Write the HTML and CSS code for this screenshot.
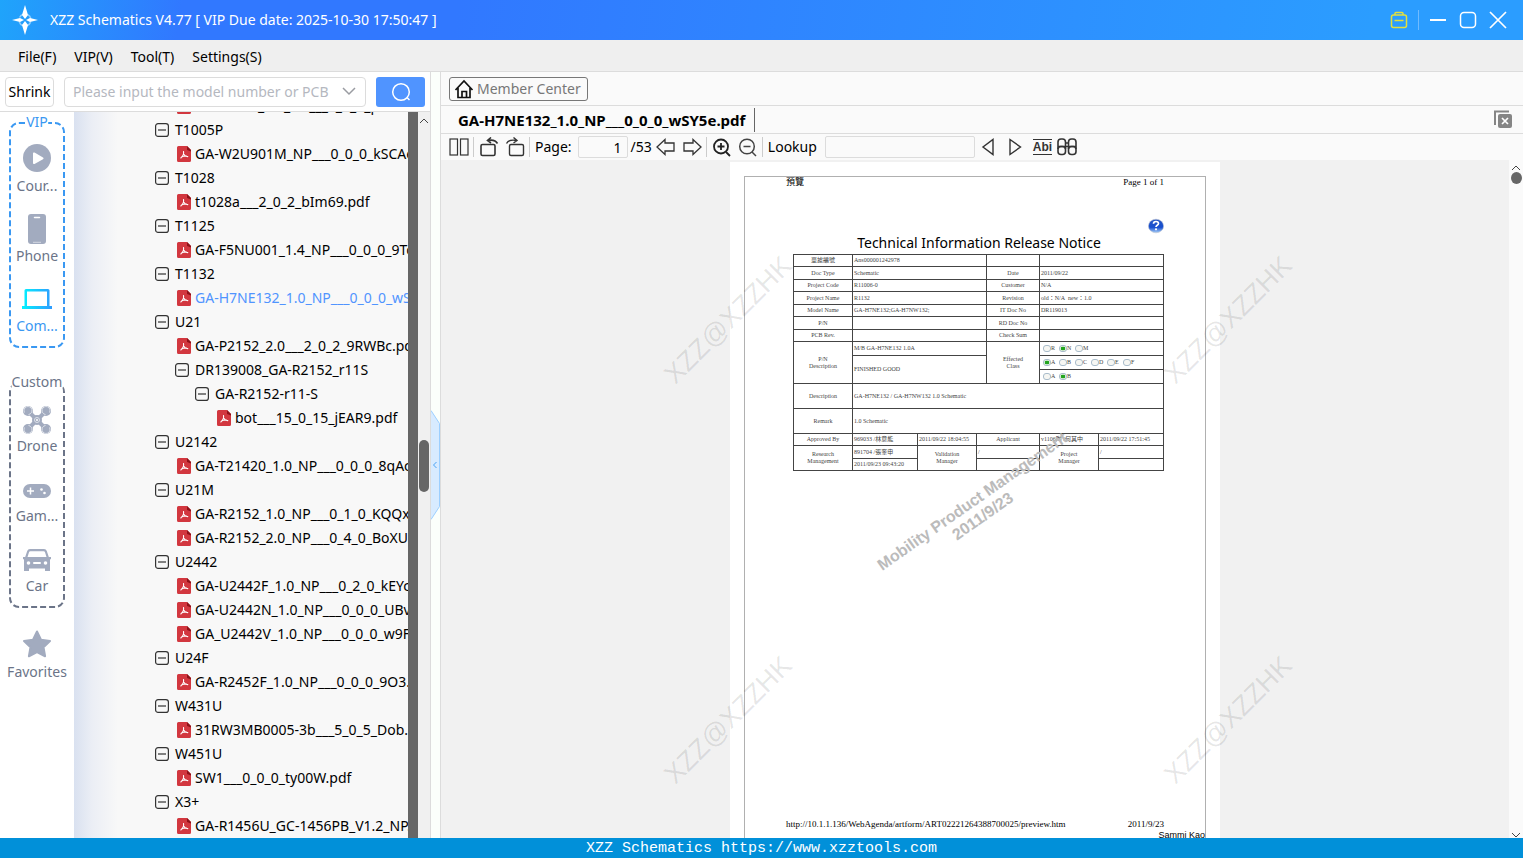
FILE: index.html
```html
<!DOCTYPE html>
<html lang="en">
<head>
    <meta charset="utf-8">
    <title>XZZ Schematics</title>
    <meta name="viewport" content="width=device-width, initial-scale=1">
    <link rel="stylesheet" href="styles.css">
</head>
<body>
    <!-- Shared icons -->
    <svg class="sprite" aria-hidden="true">
        <symbol id="minus" viewBox="0 0 14 14">
            <rect x="0.6" y="0.6" width="12.8" height="12.8" rx="2.5" fill="none" stroke="#333" stroke-width="1.2"/>
            <path d="M3 7h8" stroke="#333" stroke-width="1.2"/>
        </symbol>
        <symbol id="pdf" viewBox="0 0 14 16">
            <path d="M1.5 0H10l4 4v10.500a1.500 1.500 0 0 1-1.500 1.500h-11A1.500 1.500 0 0 1 0 14.500v-13A1.500 1.500 0 0 1 1.500 0z" fill="#d2373f"/>
            <path d="M10 0l4 4v1.500l-4-1.500z" fill="#8e1219"/>
            <path d="M6.500 5.500c.6 2.500.3 3.800-2.700 6.500M6.800 8.300c.8 1.500 2 2.300 4 2.300M4.500 11c1.500-.8 3.500-1.200 5-.9" fill="none" stroke="#fff" stroke-width="1.100" stroke-linecap="round"/>
        </symbol>
    </svg>

    <header class="titlebar">
        <svg class="logo" width="26" height="30" viewBox="0 0 26 30">
            <circle cx="13" cy="15" r="6" fill="none" stroke="#8ccdff" stroke-width="1.500" stroke-dasharray="5 4.400" stroke-dashoffset="-2.200"/>
            <path d="M13 0l3 10-3 4-3-4zM13 30l3-10-3-4-3 4zM0 15l8-2 4 2-4 2zM26 15l-8-2-4 2 4 2z" fill="#fff"/>
        </svg>
        <h1>XZZ Schematics V4.77 [ VIP Due date: 2025-10-30 17:50:47 ]</h1>
        <div class="window-buttons">
            <button type="button" aria-label="Toolbox">
                <svg width="18" height="18" viewBox="0 0 18 18" fill="none" stroke="#e3e03c" stroke-width="1.500">
                    <rect x="1.500" y="4" width="15" height="12.500" rx="2"/>
                    <path d="M5 4V2.500A1 1 0 0 1 6 1.500h6a1 1 0 0 1 1 1V4M4.500 9.500h9"/>
                </svg>
            </button>
            <span class="divider"></span>
            <button type="button" aria-label="Minimize">
                <svg width="18" height="18" viewBox="0 0 18 18" stroke="#fff" stroke-width="2"><path d="M1 9h16"/></svg>
            </button>
            <button type="button" aria-label="Maximize">
                <svg width="18" height="18" viewBox="0 0 18 18"><rect x="1.500" y="1.500" width="15" height="15" rx="3.500" fill="none" stroke="#fff" stroke-width="1.500"/></svg>
            </button>
            <button type="button" aria-label="Close">
                <svg width="18" height="18" viewBox="0 0 18 18" stroke="#fff" stroke-width="1.700"><path d="M1 1l16 16M17 1L1 17"/></svg>
            </button>
        </div>
    </header>

    <nav class="menu">
        <button type="button">File(F)</button>
        <button type="button">VIP(V)</button>
        <button type="button">Tool(T)</button>
        <button type="button">Settings(S)</button>
    </nav>

    <main class="workspace">
        <section class="left-panel">
            <form class="search">
                <button type="button" class="shrink">Shrink</button>
                <div class="combo">
                    <input type="text" aria-label="Search" placeholder="Please input the model number or PCB">
                    <svg width="14" height="9" viewBox="0 0 14 9" fill="none" stroke="#9a9ca2" stroke-width="1.500"><path d="M1 1l6 6 6-6"/></svg>
                </div>
                <button type="submit" class="go" aria-label="Search">
                    <svg width="20" height="20" viewBox="0 0 20 20" fill="none" stroke="#fff" stroke-width="1.500"><circle cx="10" cy="10" r="8.300"/><path d="M16 15.500l2.500 2.500"/></svg>
                </button>
            </form>

            <div class="browser">
                <aside class="sidebar">
                    <div class="group vip">
                        <svg class="outline"><rect x="1" y="1" rx="9"/></svg>
                        <span class="legend">VIP</span>
                        <a href="#courses">
                            <svg width="32" height="32" viewBox="0 0 32 32"><circle cx="16" cy="16" r="14" fill="#a2abbf"/><path d="M12 11.500v9.500a1 1 0 0 0 1.500.9l8.500-4.700a1 1 0 0 0 0-1.700l-8.500-4.900a1 1 0 0 0-1.500.9z" fill="#fff"/></svg>
                            <span>Cour...</span>
                        </a>
                        <a href="#phone">
                            <svg width="32" height="32" viewBox="0 0 32 32"><rect x="7" y="2" width="18" height="30" rx="3" fill="#a2abbf"/><path d="M13.500 5.500h5" stroke="#fff" stroke-width="1.500" stroke-linecap="round"/><path d="M12 30.300h8" stroke="#d5d9e3"/></svg>
                            <span>Phone</span>
                        </a>
                        <a href="#computer" class="active">
                            <svg width="32" height="32" viewBox="0 0 32 32">
                                <defs><linearGradient id="cyan"><stop offset="0" stop-color="#02f3fe"/><stop offset="1" stop-color="#2f9bff"/></linearGradient></defs>
                                <path fill="url(#cyan)" fill-rule="evenodd" d="M5 7h22a1.500 1.500 0 0 1 1.500 1.500V24H31v3H1v-3h2.500V8.500A1.500 1.500 0 0 1 5 7zm1 2.500V24h20V9.500z"/>
                            </svg>
                            <span>Com...</span>
                        </a>
                    </div>

                    <div class="group custom">
                        <svg class="outline"><rect x="1" y="1" rx="9"/></svg>
                        <span class="legend">Custom</span>
                        <a href="#drone">
                            <svg width="32" height="32" viewBox="0 0 32 32">
                                <path d="M7 7l18 18M25 7L7 25" stroke="#a2abbf" stroke-width="4"/>
                                <g fill="#a2abbf"><circle cx="7" cy="7" r="5"/><circle cx="25" cy="7" r="5"/><circle cx="7" cy="25" r="5"/><circle cx="25" cy="25" r="5"/><circle cx="16" cy="16" r="5"/></g>
                                <g fill="none" stroke="#dde1e9" stroke-width="1"><path d="M3.500 8.500a4 4 0 1 1 4 2M28.500 8.500a4 4 0 1 0-4 2M3.500 23.500a4 4 0 1 0 4-2M28.500 23.500a4 4 0 1 1-4-2"/><circle cx="16" cy="16" r="2.500"/></g>
                                <circle cx="16" cy="16" r="1" fill="#fff"/>
                            </svg>
                            <span>Drone</span>
                        </a>
                        <a href="#game">
                            <svg width="32" height="32" viewBox="0 0 32 32"><rect x="2" y="10" width="28" height="14" rx="7" fill="#a2abbf"/><path d="M9.500 13.500v7M6 17h7" stroke="#fff" stroke-width="1.500"/><circle cx="20.500" cy="15.500" r="1.300" fill="#fff"/><circle cx="23.500" cy="19" r="1.300" fill="#fff"/></svg>
                            <span>Gam...</span>
                        </a>
                        <a href="#car">
                            <svg width="32" height="32" viewBox="0 0 32 32">
                                <path fill="#a2abbf" fill-rule="evenodd" d="M9 5h14a3 3 0 0 1 2.800 2l2 6H30v2l-1 .5V27h-5v-2.500H8V27H3V15.500L2 15v-2h2.200l2-6A3 3 0 0 1 9 5zm.3 2.200a1.500 1.500 0 0 0-1.300 1L6.500 13h19L24 8.200a1.500 1.500 0 0 0-1.300-1z"/>
                                <g fill="#fff"><circle cx="7.500" cy="19" r="1.800"/><circle cx="24.500" cy="19" r="1.800"/><rect x="12" y="18" width="8" height="2" rx="1"/></g>
                            </svg>
                            <span>Car</span>
                        </a>
                    </div>

                    <a href="#favorites" class="favorites">
                        <svg width="32" height="32" viewBox="0 0 32 32"><path d="M16 3.500l4 8.300 9 1.200-6.500 6.300 1.600 9L16 24l-8.100 4.300 1.600-9L3 13l9-1.200z" fill="#a2abbf" stroke="#a2abbf" stroke-width="2" stroke-linejoin="round"/></svg>
                        <span>Favorites</span>
                    </a>
                </aside>

                <ul class="tree">
                    <li class="file"><svg><use href="#pdf"/></svg>GA-T1005_1.0_NP___0_0_0_pB</li>
                    <li><svg><use href="#minus"/></svg>T1005P</li>
                    <li class="file"><svg><use href="#pdf"/></svg>GA-W2U901M_NP___0_0_0_kSCAe.pdf</li>
                    <li><svg><use href="#minus"/></svg>T1028</li>
                    <li class="file"><svg><use href="#pdf"/></svg>t1028a___2_0_2_bIm69.pdf</li>
                    <li><svg><use href="#minus"/></svg>T1125</li>
                    <li class="file"><svg><use href="#pdf"/></svg>GA-F5NU001_1.4_NP___0_0_0_9Tc.pdf</li>
                    <li><svg><use href="#minus"/></svg>T1132</li>
                    <li class="file selected"><svg><use href="#pdf"/></svg>GA-H7NE132_1.0_NP___0_0_0_wSY5e.pdf</li>
                    <li><svg><use href="#minus"/></svg>U21</li>
                    <li class="file"><svg><use href="#pdf"/></svg>GA-P2152_2.0___2_0_2_9RWBc.pdf</li>
                    <li class="level-2"><svg><use href="#minus"/></svg>DR139008_GA-R2152_r11S</li>
                    <li class="level-3"><svg><use href="#minus"/></svg>GA-R2152-r11-S</li>
                    <li class="file level-3"><svg><use href="#pdf"/></svg>bot___15_0_15_jEAR9.pdf</li>
                    <li><svg><use href="#minus"/></svg>U2142</li>
                    <li class="file"><svg><use href="#pdf"/></svg>GA-T21420_1.0_NP___0_0_0_8qAc.pdf</li>
                    <li><svg><use href="#minus"/></svg>U21M</li>
                    <li class="file"><svg><use href="#pdf"/></svg>GA-R2152_1.0_NP___0_1_0_KQQx.pdf</li>
                    <li class="file"><svg><use href="#pdf"/></svg>GA-R2152_2.0_NP___0_4_0_BoXU.pdf</li>
                    <li><svg><use href="#minus"/></svg>U2442</li>
                    <li class="file"><svg><use href="#pdf"/></svg>GA-U2442F_1.0_NP___0_2_0_kEYc.pdf</li>
                    <li class="file"><svg><use href="#pdf"/></svg>GA-U2442N_1.0_NP___0_0_0_UBv.pdf</li>
                    <li class="file"><svg><use href="#pdf"/></svg>GA_U2442V_1.0_NP___0_0_0_w9F.pdf</li>
                    <li><svg><use href="#minus"/></svg>U24F</li>
                    <li class="file"><svg><use href="#pdf"/></svg>GA-R2452F_1.0_NP___0_0_0_9O3.pdf</li>
                    <li><svg><use href="#minus"/></svg>W431U</li>
                    <li class="file"><svg><use href="#pdf"/></svg>31RW3MB0005-3b___5_0_5_Dob.pdf</li>
                    <li><svg><use href="#minus"/></svg>W451U</li>
                    <li class="file"><svg><use href="#pdf"/></svg>SW1___0_0_0_ty00W.pdf</li>
                    <li><svg><use href="#minus"/></svg>X3+</li>
                    <li class="file"><svg><use href="#pdf"/></svg>GA-R1456U_GC-1456PB_V1.2_NP.pdf</li>
                </ul>
                <div class="tree-edge"></div>
                <div class="tree-scroll">
                    <svg width="10" height="6" viewBox="0 0 10 6" fill="none" stroke="#444"><path d="M1 5l4-4 4 4"/></svg>
                    <div class="thumb"></div>
                </div>
            </div>
        </section>

        <div class="splitter">
            <button type="button" aria-label="Collapse panel">
                <svg width="9" height="110" viewBox="0 0 9 110"><path d="M0 .5l8.500 13v83L0 109.500" fill="#d8ebff" stroke="#9ccfff"/><path d="M5.500 52l-3 3 3 3" fill="none" stroke="#4aa3f5"/></svg>
            </button>
        </div>

        <section class="right-panel">
            <div class="member-bar">
                <button type="button" class="member">
                    <svg width="20" height="20" viewBox="0 0 20 20" fill="none" stroke="#111" stroke-width="1.700"><path d="M1.500 11L10 2l8.500 9M4 9v9.500h12V9M8 18.500V12.500h4.500v6"/></svg>
                    Member Center
                </button>
            </div>
            <div class="tabs">
                <a href="#document" class="tab">GA-H7NE132_1.0_NP___0_0_0_wSY5e.pdf</a>
                <button type="button" class="close-all" aria-label="Close all">
                    <svg width="20" height="20" viewBox="0 0 20 20"><path d="M2 15V1.500h14" fill="none" stroke="#858585" stroke-width="2"/><rect x="5" y="4" width="14" height="14" rx="2" fill="#858585"/><path d="M9 8l6 6M15 8l-6 6" stroke="#fff" stroke-width="1.700"/></svg>
                </button>
            </div>
            <div class="toolbar">
                <button type="button" aria-label="Two pages"><svg width="20" height="20" viewBox="0 0 20 20" fill="none" stroke="#333" stroke-width="1.200"><rect x="1" y="2" width="7.500" height="16"/><rect x="11.500" y="2" width="7.500" height="16"/></svg></button>
                <span class="line"></span>
                <button type="button" aria-label="Rotate left"><svg width="20" height="20" viewBox="0 0 20 20" fill="none" stroke="#333" stroke-width="1.600"><rect x="2" y="7.500" width="14" height="11" rx="1.500"/><path d="M18.500 6.500c-1.500-2.800-5-4-10-3M12 .5L8.500 3.500 12 6"/></svg></button>
                <button type="button" class="rotate-right" aria-label="Rotate right"><svg width="20" height="20" viewBox="0 0 20 20" fill="none" stroke="#333" stroke-width="1.400"><rect x="4.500" y="7.500" width="14" height="11" rx="1.500"/><path d="M1.500 6.500c1.500-2.800 5-4 10-3M8.500 .5l3.500 3L8.500 6"/></svg></button>
                <span class="line"></span>
                <label for="page">Page:</label>
                <input type="text" id="page" value="1">
                <span class="total">/53</span>
                <button type="button" aria-label="Previous page"><svg width="20" height="20" viewBox="0 0 20 20" fill="none" stroke="#333" stroke-width="1.300"><path d="M1 10l8-7.500V6h9v8H9v3.500z"/></svg></button>
                <button type="button" class="next" aria-label="Next page"><svg width="20" height="20" viewBox="0 0 20 20" fill="none" stroke="#333" stroke-width="1.300"><path d="M19 10l-8-7.500V6H2v8h9v3.500z"/></svg></button>
                <span class="line"></span>
                <button type="button" aria-label="Zoom in"><svg width="20" height="20" viewBox="0 0 20 20" fill="none" stroke="#222" stroke-width="1.800"><circle cx="9" cy="9.500" r="7"/><path d="M9 6v7M5.500 9.500h7M14 15l4 4"/></svg></button>
                <button type="button" class="zoom-out" aria-label="Zoom out"><svg width="20" height="20" viewBox="0 0 20 20" fill="none" stroke="#444" stroke-width="1.500"><circle cx="9" cy="9.500" r="7.300"/><path d="M5.500 9.500h7M14 15l4 4"/></svg></button>
                <span class="line"></span>
                <label for="lookup">Lookup</label>
                <input type="text" id="lookup">
                <button type="button" aria-label="Find previous"><svg width="20" height="20" viewBox="0 0 20 20" fill="none" stroke="#333" stroke-width="1.400"><path d="M14 2.500v15L4 10z"/></svg></button>
                <button type="button" class="find-next" aria-label="Find next"><svg width="20" height="20" viewBox="0 0 20 20" fill="none" stroke="#333" stroke-width="1.400"><path d="M5 2.500v15L15.500 10z"/></svg></button>
                <button type="button" class="match-word">Abi</button>
                <button type="button" aria-label="Search all"><svg width="22" height="20" viewBox="0 0 22 20" fill="none" stroke="#333" stroke-width="1.600"><path d="M2 12V5a3 3 0 0 1 3-3h1.500a3 3 0 0 1 3 3v7M12.500 12V5a3 3 0 0 1 3-3H17a3 3 0 0 1 3 3v7M9.500 6h3M2 9.500h18"/><rect x="2" y="9.500" width="7.500" height="8" rx="3"/><rect x="12.500" y="9.500" width="7.500" height="8" rx="3"/></svg></button>
            </div>

            <div class="viewer">
                <div class="canvas">
                    <article class="sheet">
                        <div class="frame">
                            <div class="sheet-line"><span>預覽</span><span>Page 1 of 1</span></div>
                            <svg class="help" width="16" height="16" viewBox="0 0 16 16">
                                <defs><linearGradient id="ball" x2="0" y2="1"><stop offset="0" stop-color="#2354c4"/><stop offset=".6" stop-color="#174fd0"/><stop offset="1" stop-color="#a9d1f7"/></linearGradient></defs>
                                <ellipse cx="8" cy="8" rx="7.600" ry="6.800" fill="url(#ball)" stroke="#b8c0d0" stroke-width=".6"/>
                                <path d="M5.500 5.800c0-3 5-3 5-.3 0 1.800-2.500 1.700-2.500 3.500" fill="none" stroke="#fff" stroke-width="1.700"/><circle cx="8" cy="11.300" r="1.100" fill="#fff"/>
                            </svg>
                            <h2>Technical Information Release Notice</h2>
                            <table>
                                <colgroup><col class="c1"><col class="c2"><col class="c1"><col class="c3"><col class="c4"><col class="c1"><col class="c2"></colgroup>
                                <tr><th>單據編號</th><td colspan="3">Ans000001242978</td><th></th><td colspan="2"></td></tr>
                                <tr><th>Doc Type</th><td colspan="3">Schematic</td><th>Date</th><td colspan="2">2011/09/22</td></tr>
                                <tr><th>Project Code</th><td colspan="3">R11006-0</td><th>Customer</th><td colspan="2">N/A</td></tr>
                                <tr><th>Project Name</th><td colspan="3">R1132</td><th>Revision</th><td colspan="2">old：N/A&nbsp; new：1.0</td></tr>
                                <tr><th>Model Name</th><td colspan="3">GA-H7NE132;GA-H7NW132;</td><th>IT Doc No</th><td colspan="2">DR119013</td></tr>
                                <tr><th>P/N</th><td colspan="3"></td><th>RD Doc No</th><td colspan="2"></td></tr>
                                <tr><th>PCB Rev.</th><td colspan="3"></td><th>Check Sum</th><td colspan="2"></td></tr>
                                <tr class="radios">
                                    <th rowspan="3">P/N<br>Description</th><td colspan="3">M/B GA-H7NE132 1.0A</td><th rowspan="3">Effected<br>Class</th>
                                    <td colspan="2"><div class="options"><label><input type="radio" name="stage">R</label><label><input type="radio" name="stage" checked>N</label><label><input type="radio" name="stage">M</label></div></td>
                                </tr>
                                <tr class="radios">
                                    <td colspan="3" rowspan="2">FINISHED GOOD</td>
                                    <td colspan="2"><div class="options"><label><input type="radio" name="class" checked>A</label><label><input type="radio" name="class">B</label><label><input type="radio" name="class">C</label><label><input type="radio" name="class">D</label><label><input type="radio" name="class">E</label><label><input type="radio" name="class">F</label></div></td>
                                </tr>
                                <tr class="radios">
                                    <td colspan="2"><div class="options"><label><input type="radio" name="level">A</label><label><input type="radio" name="level" checked>B</label></div></td>
                                </tr>
                                <tr class="tall"><th>Description</th><td colspan="6">GA-H7NE132 / GA-H7NW132 1.0 Schematic</td></tr>
                                <tr class="tall"><th>Remark</th><td colspan="6">1.0 Schematic</td></tr>
                                <tr><th>Approved By</th><td>969033 /林意能</td><td>2011/09/22 18:04:55</td><th colspan="2">Applicant</th><td>v1106陶 /何其中</td><td>2011/09/22 17:51:45</td></tr>
                                <tr><th rowspan="2">Research<br>Management</th><td>891704 /張奎申</td><th rowspan="2">Validation<br>Manager</th><td colspan="2">/</td><th rowspan="2">Project<br>Manager</th><td>/</td></tr>
                                <tr><td>2011/09/23 09:43:20</td><td colspan="2"></td><td></td></tr>
                            </table>
                            <div class="sheet-line bottom"><span>http://10.1.1.136/WebAgenda/artform/ART02221264388700025/preview.htm</span><span>2011/9/23</span></div>
                            <div class="signer">Sammi Kao</div>
                        </div>
                        <div class="stamp">Mobility Product Management<br>2011/9/23</div>
                        <div class="watermark top left">XZZ@XZZHK</div>
                        <div class="watermark top right">XZZ@XZZHK</div>
                        <div class="watermark low left">XZZ@XZZHK</div>
                        <div class="watermark low right">XZZ@XZZHK</div>
                    </article>
                </div>
                <div class="view-scroll">
                    <svg width="10" height="6" viewBox="0 0 10 6" fill="none" stroke="#444"><path d="M1 5l4-4 4 4"/></svg>
                    <div class="knob"></div>
                    <svg class="down" width="10" height="6" viewBox="0 0 10 6" fill="none" stroke="#444"><path d="M1 1l4 4 4-4"/></svg>
                </div>
            </div>
        </section>
    </main>

    <footer>XZZ Schematics https://www.xzztools.com</footer>
</body>
</html>
```
FILE: styles.css
```css
:root {
    --blue: #5094ff;
    --sky: #3a98f2;
    --slate: #6b7488;
    --line: #dcdcdc;
    --panel: #fafafa;
}

* {
    margin: 0;
    padding: 0;
    box-sizing: border-box;
}

body {
    display: flex;
    flex-direction: column;
    height: 100vh;
    overflow: hidden;
    background-color: #fff;
    color: #000;
    font-family: "Noto Sans", "Noto Sans CJK SC", sans-serif;
    font-size: 14px;
    line-height: 20px;
}

button {
    border: none;
    background: none;
    font: inherit;
    color: inherit;
    cursor: pointer;
}

a {
    color: inherit;
    text-decoration: none;
}

svg {
    display: block;
    flex-shrink: 0;
}

.sprite {
    position: absolute;
    width: 0;
    height: 0;
}

/* Title bar */
.titlebar {
    display: flex;
    align-items: center;
    height: 40px;
    flex-shrink: 0;
    padding: 0 16px 0 12px;
    color: #fff;
    background: linear-gradient(100deg, #1fa4fb 0, #3178ff 180px, #3178ff 30%, #2b9dff 90%);
}

.titlebar h1 {
    flex: 1;
    margin-left: 12px;
    font-size: 14px;
    font-weight: 400;
}

.window-buttons {
    display: flex;
    align-items: center;
    gap: 12px;
}

.window-buttons .divider {
    width: 1px;
    height: 20px;
    margin: 0 -2px;
    background-color: #70bbff;
}

/* Menu */
.menu {
    display: flex;
    gap: 18px;
    height: 32px;
    flex-shrink: 0;
    padding: 2px 18px 0;
    background-color: #efefef;
    border-bottom: 1px solid var(--line);
}

/* Panels */
.workspace {
    display: flex;
    flex: 1;
    min-height: 0;
}

.left-panel {
    display: flex;
    flex-direction: column;
    width: 430px;
    flex-shrink: 0;
}

.search {
    display: flex;
    align-items: center;
    gap: 10px;
    height: 40px;
    flex-shrink: 0;
    padding: 0 5px;
    border-bottom: 1px solid var(--line);
}

.search .shrink {
    width: 49px;
    height: 30px;
    border: 1px solid var(--line);
    border-radius: 4px;
}

.combo {
    display: flex;
    align-items: center;
    flex: 1;
    height: 30px;
    padding: 0 9px 0 8px;
    border: 1px solid var(--line);
    border-radius: 4px;
}

.combo input {
    flex: 1;
    min-width: 0;
    border: none;
    outline: none;
    font: inherit;
}

.combo input::placeholder {
    color: #b5b8bf;
}

.search .go {
    display: flex;
    align-items: center;
    justify-content: center;
    width: 49px;
    height: 30px;
    border-radius: 3px;
    background-color: var(--blue);
}

.browser {
    display: flex;
    flex: 1;
    min-height: 0;
}

/* Sidebar */
.sidebar {
    width: 74px;
    flex-shrink: 0;
    padding-top: 10px;
}

.sidebar a {
    display: flex;
    flex-direction: column;
    align-items: center;
    height: 56px;
    color: var(--slate);
}

.sidebar a svg {
    margin-bottom: 2px;
}

.group {
    position: relative;
    display: flex;
    flex-direction: column;
    gap: 14px;
    margin: 0 9px 34px;
    padding: 20px 0 10px;
}

.group .outline {
    position: absolute;
    top: 0;
    left: 0;
    width: 100%;
    height: 100%;
}

.outline rect {
    width: calc(100% - 2px);
    height: calc(100% - 2px);
    fill: none;
    stroke: var(--sky);
    stroke-width: 2;
    stroke-dasharray: 6 3;
}

.custom .outline rect {
    stroke: var(--slate);
}

.legend {
    position: absolute;
    top: -10px;
    left: 50%;
    transform: translateX(-50%);
    color: var(--sky);
    background-color: #fff;
}

.custom .legend {
    color: var(--slate);
}

.sidebar .active {
    color: var(--sky);
}

.custom {
    margin-bottom: 20px;
    padding: 22px 0 8px;
}

.custom a svg {
    margin-bottom: 0;
}

/* Tree */
.tree {
    flex: 1;
    min-width: 0;
    overflow: hidden;
    list-style: none;
    background: linear-gradient(90deg, #d9e1f0 0, #ebeef5 18px, #f8f8f8 44px);
}

.tree li {
    display: flex;
    align-items: center;
    gap: 6px;
    height: 24px;
    padding-left: 81px;
    white-space: nowrap;
}

.tree li:first-child {
    margin-top: -18px;
}

.tree li svg {
    width: 14px;
    height: 14px;
}

.tree .file {
    gap: 4px;
    padding-left: 103px;
}

.tree .file svg {
    height: 16px;
}

.tree .level-2 {
    padding-left: 101px;
}

.tree .level-3 {
    padding-left: 121px;
}

.tree .file.level-3 {
    padding-left: 143px;
}

.tree .selected {
    color: var(--blue);
}

.tree-edge {
    width: 10px;
    background-color: #666;
}

.tree-scroll {
    display: flex;
    flex-direction: column;
    align-items: center;
    width: 12px;
    padding-top: 6px;
    background-color: #f0f0f0;
}

.tree-scroll .thumb {
    width: 10px;
    height: 52px;
    margin-top: 316px;
    border-radius: 5px;
    background-color: #666;
}

.splitter {
    display: flex;
    align-items: center;
    width: 11px;
    flex-shrink: 0;
    padding-top: 19px;
    border: 1px solid var(--line);
    border-width: 0 1px;
    background-color: #fbfffb;
}

/* Right panel */
.right-panel {
    display: flex;
    flex-direction: column;
    flex: 1;
    min-width: 0;
    background-color: var(--panel);
}

.member-bar {
    display: flex;
    align-items: center;
    height: 34px;
    flex-shrink: 0;
    padding: 0 8px;
    border-bottom: 1px solid var(--line);
}

.member {
    display: flex;
    align-items: center;
    gap: 3px;
    height: 24px;
    padding: 0 6px 0 4px;
    border: 1px solid #777;
    border-radius: 3px;
    color: #777;
}

.tabs {
    display: flex;
    align-items: center;
    justify-content: space-between;
    height: 28px;
    flex-shrink: 0;
    padding: 0 10px 0 9px;
    border-bottom: 1px solid var(--line);
}

.tab {
    padding: 2px 9px 2px 8px;
    border-right: 1px solid #666;
    font-size: 15px;
    font-weight: 700;
}

.toolbar {
    display: flex;
    align-items: center;
    height: 26px;
    flex-shrink: 0;
    padding-left: 8px;
}

.toolbar .line {
    width: 1px;
    height: 20px;
    margin: 0 5px 0 4px;
    background-color: #ccc;
}

.toolbar input {
    height: 22px;
    border: 1px solid var(--line);
    border-radius: 2px;
    background-color: var(--panel);
    font: inherit;
}

#page {
    width: 50px;
    margin-left: 6px;
    padding-right: 5px;
    text-align: right;
}

#lookup {
    width: 150px;
    margin: 0 4px 0 8px;
}

.total {
    margin: 0 4px 0 3px;
}

.rotate-right,
.next,
.zoom-out,
.find-next {
    margin-left: 6px;
}

.toolbar .match-word {
    margin: 0 4px 0 8px;
    border: 1px solid #333;
    border-width: 1px 0;
    color: #333;
    font: 700 12px/14px "Liberation Sans", Arial, sans-serif;
}

/* Document */
.viewer {
    display: flex;
    flex: 1;
    min-height: 0;
    overflow: hidden;
}

.canvas {
    flex: 1;
    padding-top: 2px;
    background-color: #f1f1f1;
}

.sheet {
    position: relative;
    width: 490px;
    margin: 0 auto;
    padding: 14px;
    background-color: #fff;
    font-family: "Liberation Serif", "Noto Sans CJK TC", serif;
}

.frame {
    display: flex;
    flex-direction: column;
    min-height: 665px;
    border: 1px solid #b0b0b0;
}

.sheet-line {
    display: flex;
    justify-content: space-between;
    padding: 0 41px;
    font-size: 9px;
    line-height: 11px;
}

.sheet-line.bottom {
    margin-top: auto;
}

.help {
    align-self: flex-end;
    margin: 30px 41px 0 0;
}

.frame h2 {
    padding: 0 0 2px 8px;
    text-align: center;
    font: 400 14px/18px "Noto Sans", sans-serif;
}

.frame table {
    width: 371px;
    margin-left: 48px;
    border-collapse: collapse;
    table-layout: fixed;
    color: #444;
    font-size: 6px;
    line-height: 7px;
}

.c1 {
    width: 59px;
}

.c2 {
    width: 65px;
}

.c3 {
    width: 10px;
}

.c4 {
    width: 53px;
}

.frame tr {
    height: 12px;
}

.frame tr:nth-child(even) {
    height: 13px;
}

.frame table tr.radios {
    height: 14px;
}

.frame table tr.tall {
    height: 25px;
}

.frame th,
.frame td {
    border: 1px solid #444;
    font-weight: 400;
    white-space: nowrap;
}

.frame td {
    padding-left: 1px;
}

.options {
    display: flex;
    padding-left: 2px;
}

.options label {
    display: flex;
    align-items: center;
    width: 16px;
}

.options input {
    appearance: none;
    width: 8px;
    height: 7px;
    border: 1px solid #a9bccb;
    border-radius: 3px;
    background-color: #f6f6f2;
}

.options input:checked {
    background: radial-gradient(#22a41f 45%, #dff0dc 60%);
}

.signer {
    text-align: right;
    font: 9px/10px "Liberation Sans", Arial, sans-serif;
}

.stamp {
    position: absolute;
    top: 329px;
    left: 134px;
    text-align: center;
    white-space: nowrap;
    transform: rotate(-35deg);
    color: #bbb;
    font: 700 16px/18px "Liberation Sans", Arial, sans-serif;
}

.watermark {
    position: absolute;
    transform: translate(-50%, -50%) rotate(-45deg);
    color: rgba(0, 0, 0, 0.1);
    font: 27px/30px "Liberation Sans", Arial, sans-serif;
}

.watermark.top {
    top: 158px;
}

.watermark.low {
    top: 558px;
}

.watermark.left {
    left: -2px;
}

.watermark.right {
    left: 498px;
}

.view-scroll {
    display: flex;
    flex-direction: column;
    align-items: center;
    width: 14px;
    padding-top: 5px;
}

.view-scroll .knob {
    width: 11px;
    height: 12px;
    margin-top: 1px;
    border-radius: 50%;
    background-color: #666;
}

.view-scroll .down {
    margin-top: auto;
}

footer {
    height: 20px;
    flex-shrink: 0;
    color: #fff;
    background-color: #0190d9;
    text-align: center;
    font: 15px/22px "Liberation Mono", monospace;
}
```
